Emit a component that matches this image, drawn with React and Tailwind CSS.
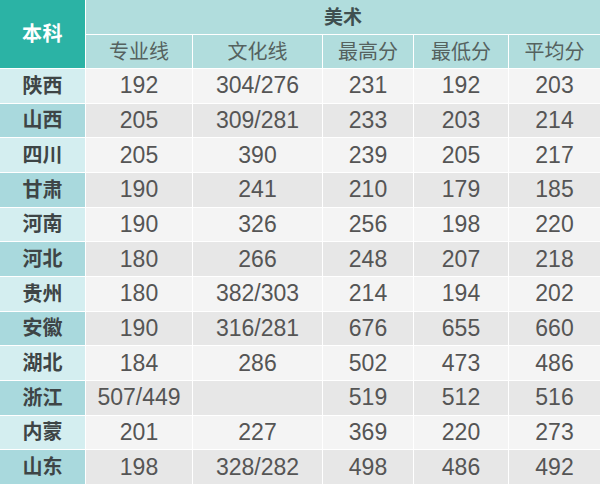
import React from "react";

const rows = [
  ["陕西", "192", "304/276", "231", "192", "203"],
  ["山西", "205", "309/281", "233", "203", "214"],
  ["四川", "205", "390", "239", "205", "217"],
  ["甘肃", "190", "241", "210", "179", "185"],
  ["河南", "190", "326", "256", "198", "220"],
  ["河北", "180", "266", "248", "207", "218"],
  ["贵州", "180", "382/303", "214", "194", "202"],
  ["安徽", "190", "316/281", "676", "655", "660"],
  ["湖北", "184", "286", "502", "473", "486"],
  ["浙江", "507/449", "", "519", "512", "516"],
  ["内蒙", "201", "227", "369", "220", "273"],
  ["山东", "198", "328/282", "498", "486", "492"],
];

const heads = ["专业线", "文化线", "最高分", "最低分", "平均分"];

export default function App() {
  return (
    <div
      className="w-[600px] h-[484px] overflow-hidden bg-white grid gap-px grid-cols-[85px_106px_129px_90px_94px_91px] grid-rows-[34px_33px_repeat(12,minmax(0,1fr))] leading-none"
      style={{ fontFamily: '"Liberation Sans", "Noto Sans CJK SC", sans-serif' }}
    >
      {/* Header */}
      <div className="row-span-2 bg-[#2bb3a5] flex items-center justify-center text-white font-bold text-[20px] tracking-wide">
        本科
      </div>
      <div className="col-span-5 bg-[#b1dddd] flex items-center justify-center text-[19px] text-[#3f4f50] font-bold">
        美术
      </div>
      {heads.map((h) => (
        <div key={h} className="bg-[#b1dddd] flex items-center justify-center text-[20px] text-[#55625f]">
          {h}
        </div>
      ))}

      {/* Body */}
      {rows.map((r, i) => (
        <React.Fragment key={r[0]}>
          <div
            className={`flex items-center justify-center font-bold text-[20px] text-[#3e4546] ${
              i % 2 === 0 ? "bg-[#d4eef0]" : "bg-[#a9d9dd]"
            }`}
          >
            {r[0]}
          </div>
          {r.slice(1).map((v, j) => (
            <div
              key={j}
              className={`flex items-center justify-center text-[23px] text-[#555] ${
                i % 2 === 0 ? "bg-[#f4f4f4]" : "bg-[#e7e7e7]"
              }`}
            >
              {v}
            </div>
          ))}
        </React.Fragment>
      ))}
    </div>
  );
}
